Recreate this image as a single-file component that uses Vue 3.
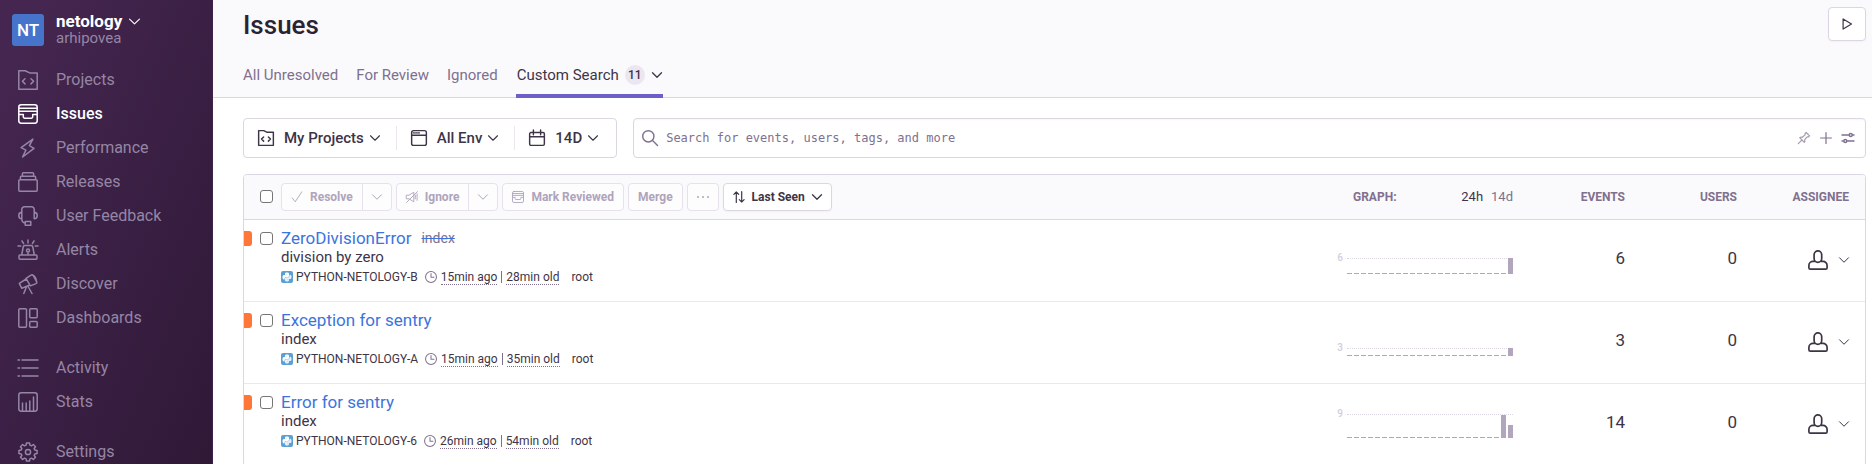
<script setup>
import { h, ref } from 'vue'

function gearPath() {
  const points = []
  for (let i = 0; i < 8; i++) {
    const mid = (i * Math.PI) / 4
    for (const [offset, radius] of [[-0.27, 7.1], [-0.17, 9.2], [0.17, 9.2], [0.27, 7.1]]) {
      points.push(`${(10 + radius * Math.sin(mid + offset)).toFixed(2)} ${(10 - radius * Math.cos(mid + offset)).toFixed(2)}`)
    }
  }
  return `M${points.join('L')}z M7.4 10a2.6 2.6 0 1 0 5.2 0a2.6 2.6 0 1 0-5.2 0`
}

const roundBox = 'M3.2.8h13.6a2.4 2.4 0 0 1 2.4 2.4v13.6a2.4 2.4 0 0 1-2.4 2.4H3.2a2.4 2.4 0 0 1-2.4-2.4V3.2A2.4 2.4 0 0 1 3.2.8z'

const icons = {
  projects: 'M.8.8h6.4l4.4 2.1h7.6v16.3H.8zM7 8.7l-2.6 2.6L7 13.9M13 8.7l2.6 2.6-2.6 2.6',
  issues: roundBox + 'M.8 4.2h18.4M.8 7.3h18.4M.8 10.6h4.5v2.2a1.4 1.4 0 0 0 1.4 1.4h6.6a1.4 1.4 0 0 0 1.4-1.4v-2.2h4.5',
  performance: 'M14.9 1.1L3.1 9.6l4.8 2.5L4.6 19 16 10.3l-4.6-2.6z',
  releases: 'M1.8 7.7h16.4a1 1 0 0 1 1 1v9.5a1 1 0 0 1-1 1H1.8a1 1 0 0 1-1-1V8.7a1 1 0 0 1 1-1zM2.4 7.7V5.2a1 1 0 0 1 1-1h13.2a1 1 0 0 1 1 1v2.5M4.4 4.2V1.8a1 1 0 0 1 1-1h9.2a1 1 0 0 1 1 1v2.4',
  feedback: 'M3.8 6.2V3.4A2.6 2.6 0 0 1 6.4.8h7.2a2.6 2.6 0 0 1 2.6 2.6v2.8M3.8 6.2v6.6c-2 0-3-1.5-3-3.3s1-3.3 3-3.3zM16.2 6.2v6.6c2 0 3-1.5 3-3.3s-1-3.3-3-3.3zM3.8 12.8c0 2.7 1.2 4.1 3.4 4.4M7.2 15.5h5.6v3.7H7.2z',
  alerts: 'M2 15h16a1 1 0 0 1 1 1v2.2a1 1 0 0 1-1 1H2a1 1 0 0 1-1-1V16a1 1 0 0 1 1-1zM3.7 15L5.2 7a1.7 1.7 0 0 1 1.7-1.4h6.2A1.7 1.7 0 0 1 14.8 7l1.5 8M8.5 10.5a1.5 1.5 0 1 0 3 0a1.5 1.5 0 1 0-3 0M10 12v3M10 0v3M4 1l1.6 2.6M16 1l-1.6 2.6M0 6h2.8M17.2 6H20',
  discover: 'M8 4.3l5-3.1a1.5 1.5 0 0 1 2-.1l3.7 6.6a1.5 1.5 0 0 1-.7 1.9l-5.6 2.3zM8.2 5L1.3 9.3l2.5 5 7.5-3.2M14 1c2.6.4 4.6 3.7 4.4 6.6M8.600 12.5L5.8 19.5M9.8 12l4.2 7.5',
  dashboards: 'M1.800.8h5.7a1 1 0 0 1 1 1v16.4a1 1 0 0 1-1 1H1.8a1 1 0 0 1-1-1V1.8a1 1 0 0 1 1-1zM12.700.8h5.5a1 1 0 0 1 1 1v7a1 1 0 0 1-1 1h-5.5a1 1 0 0 1-1-1v-7a1 1 0 0 1 1-1zM12.7 13.5h5.5a1 1 0 0 1 1 1v3.7a1 1 0 0 1-1 1h-5.5a1 1 0 0 1-1-1v-3.7a1 1 0 0 1 1-1z',
  activity: 'M0 2h1.5M4 2h16M0 10h1.5M4 10h16M0 18h1.5M4 18h16',
  stats: roundBox + 'M4.5 11v8M8.2 11v8M11.8 9v10M15.5 5v14',
  settings: gearPath(),
  window: roundBox + 'M.8 6.5h18.4M3 3.6h1.5M6 3.6h1.5M9 3.6h1.5',
  calendar: 'M2.4 3.2h15.2a1.6 1.6 0 0 1 1.6 1.6v12.8a1.6 1.6 0 0 1-1.6 1.6H2.4a1.6 1.6 0 0 1-1.6-1.6V4.8a1.6 1.6 0 0 1 1.6-1.6zM.8 8.5h18.4M5.5 0v6M14.5 0v6',
  search: 'M.9 7.9a7 7 0 1 0 14 0a7 7 0 1 0-14 0M12.9 12.9l6.5 6.5',
  pin: 'M.5 19.5l6.3-6.3M2.8 9.5l7.7 7.7c1-1.4 1.2-2.8.7-4.5l4.1-4.5 2 .1 1.9-1.9L13.6.8l-1.9 1.9.1 2L7.3 8.800c-1.7-.5-3.1-.3-4.500.7z',
  plus: 'M10 1v18M1 10h18',
  sliders: 'M0 5h12M17 5h3M12 5a2.5 2.5 0 1 0 5 0a2.5 2.5 0 1 0-5 0M0 15h3M8 15h12M3 15a2.5 2.5 0 1 0 5 0a2.5 2.5 0 1 0-5 0',
  check: 'M2 11.5l5 6.500L18 1.5',
  mute: 'M1 7h4l8-5v16l-8-5H1zM1 19L19 1M15.5 7v6M18.5 4.5v11',
  sort: 'M5.5 19V1.5M1.5 5.5l4-4 4 4M14.5 1v17.5M10.5 14.5l4 4 4-4',
  clock: 'M.9 10a9.1 9.1 0 1 0 18.2 0a9.1 9.1 0 1 0-18.2 0M10 4v6.5h5',
  play: 'M3.5 1.5v17L17.5 10z',
  user: 'M9.900.9a3.8 3.8 0 0 1 3.8 3.8v3.8a3.8 3.8 0 0 1-7.6 0V4.7A3.8 3.8 0 0 1 9.900.9zM6.3 11.4H5a4.1 4.1 0 0 0-4.1 4.1v2.2a1.4 1.4 0 0 0 1.4 1.4h15.4a1.4 1.4 0 0 0 1.4-1.4v-2.2a4.1 4.1 0 0 0-4.1-4.1h-1.4',
  chevron: 'M1 5.5l9 9 9-9',
}

const Icon = (props) =>
  h('svg', { viewBox: '0 0 20 20', width: props.size, height: props.size, class: 'icon', 'aria-hidden': 'true' }, [
    h('path', {
      d: icons[props.name],
      fill: 'none',
      stroke: 'currentColor',
      'stroke-width': props.weight || 1.5,
      'stroke-linecap': 'round',
      'stroke-linejoin': 'round',
    }),
  ])
Icon.props = ['name', 'size', 'weight']

const navGroups = [
  [
    { icon: 'projects', label: 'Projects' },
    { icon: 'issues', label: 'Issues', active: true },
    { icon: 'performance', label: 'Performance' },
    { icon: 'releases', label: 'Releases' },
    { icon: 'feedback', label: 'User Feedback' },
    { icon: 'alerts', label: 'Alerts' },
    { icon: 'discover', label: 'Discover' },
    { icon: 'dashboards', label: 'Dashboards' },
  ],
  [
    { icon: 'activity', label: 'Activity' },
    { icon: 'stats', label: 'Stats' },
  ],
  [{ icon: 'settings', label: 'Settings' }],
]

const tabs = ['All Unresolved', 'For Review', 'Ignored']

const filters = [
  { icon: 'projects', label: 'My Projects' },
  { icon: 'window', label: 'All Env' },
  { icon: 'calendar', label: '14D' },
]

const series = (...tail) => [...Array(24 - tail.length).fill(1), ...tail]

const issues = [
  { title: 'ZeroDivisionError', culprit: 'index', message: 'division by zero', id: 'PYTHON-NETOLOGY-B', seen: '15min ago', age: '28min old', events: 6, users: 0, peak: 6, height: 16, bars: series(16) },
  { title: 'Exception for sentry', message: 'index', id: 'PYTHON-NETOLOGY-A', seen: '15min ago', age: '35min old', events: 3, users: 0, peak: 3, height: 8, bars: series(8) },
  { title: 'Error for sentry', message: 'index', id: 'PYTHON-NETOLOGY-6', seen: '26min ago', age: '54min old', events: 14, users: 0, peak: 9, height: 24, bars: series(23, 13) },
]

const query = ref('')
</script>

<template>
  <div class="app">
    <aside class="sidebar">
      <button class="org" type="button">
        <span class="avatar">NT</span>
        <span class="org-text">
          <span class="org-name">netology <Icon name="chevron" :size="11" :weight="2" /></span>
          <span class="org-user">arhipovea</span>
        </span>
      </button>
      <nav>
        <ul v-for="(group, i) in navGroups" :key="i" class="nav-group">
          <li v-for="item in group" :key="item.label">
            <a href="#" class="nav-item" :class="{ active: item.active }">
              <Icon :name="item.icon" :size="20" /><span>{{ item.label }}</span>
            </a>
          </li>
        </ul>
      </nav>
    </aside>

    <main class="main">
      <header class="page-header">
        <div class="title-row">
          <h1>Issues</h1>
          <button class="play" type="button" aria-label="Real-time updates"><Icon name="play" :size="12" :weight="2" /></button>
        </div>
        <nav class="tabs">
          <a v-for="tab in tabs" :key="tab" href="#" class="tab">{{ tab }}</a>
          <a href="#" class="tab current">Custom Search <span class="badge">11</span><Icon name="chevron" :size="10" :weight="2.5" /></a>
        </nav>
      </header>

      <div class="content">
        <div class="controls">
          <div class="filters">
            <button v-for="f in filters" :key="f.label" type="button" class="filter">
              <Icon :name="f.icon" :size="16" :weight="1.8" /><span>{{ f.label }}</span><Icon name="chevron" :size="10" :weight="2.2" />
            </button>
          </div>
          <div class="search">
            <Icon name="search" :size="16" :weight="1.8" />
            <input v-model="query" type="text" aria-label="Search issues" placeholder="Search for events, users, tags, and more" />
            <button type="button" aria-label="Pin search" class="pin"><Icon name="pin" :size="12" :weight="2" /></button>
            <button type="button" aria-label="Save search"><Icon name="plus" :size="12" :weight="2" /></button>
            <button type="button" aria-label="Search builder"><Icon name="sliders" :size="12" :weight="2.4" /></button>
          </div>
        </div>

        <div class="panel">
          <table>
            <thead>
              <tr>
                <th class="col-issue">
                  <div class="toolbar">
                    <input type="checkbox" aria-label="Select all" />
                    <div class="actions">
                      <div class="split">
                        <button type="button" disabled><Icon name="check" :size="12" />Resolve</button>
                        <button type="button" disabled aria-label="Resolve options" class="more"><Icon name="chevron" :size="10" :weight="2" /></button>
                      </div>
                      <div class="split">
                        <button type="button" disabled><Icon name="mute" :size="12" />Ignore</button>
                        <button type="button" disabled aria-label="Ignore options" class="more"><Icon name="chevron" :size="10" :weight="2" /></button>
                      </div>
                      <div class="split"><button type="button" disabled><Icon name="issues" :size="12" />Mark Reviewed</button></div>
                      <div class="split"><button type="button" disabled>Merge</button></div>
                      <div class="split"><button type="button" disabled aria-label="More actions"><span class="dots"><i></i><i></i><i></i></span></button></div>
                      <div class="split enabled"><button type="button"><Icon name="sort" :size="12" :weight="2" />Last Seen<Icon name="chevron" :size="10" :weight="2.5" /></button></div>
                    </div>
                  </div>
                </th>
                <th class="col-graph">
                  <div class="graph-head">
                    <span>GRAPH:</span>
                    <span class="ranges"><a href="#" class="on">24h</a><a href="#">14d</a></span>
                  </div>
                </th>
                <th class="col-num">EVENTS</th>
                <th class="col-num">USERS</th>
                <th class="col-num">ASSIGNEE</th>
              </tr>
            </thead>
            <tbody>
              <tr v-for="issue in issues" :key="issue.id">
                <td class="issue-cell">
                  <div class="issue">
                    <span class="level"></span>
                    <input type="checkbox" :aria-label="'Select ' + issue.title" />
                    <div>
                      <div class="issue-title"><a href="#">{{ issue.title }}</a><s v-if="issue.culprit">{{ issue.culprit }}</s></div>
                      <div class="issue-message">{{ issue.message }}</div>
                      <div class="meta">
                        <svg class="platform" viewBox="0 0 12 12" width="12" height="12" aria-hidden="true">
                          <rect width="12" height="12" rx="2" fill="#5b9fd4" />
                          <path d="M4 4V2.800C4 1.900 4.700 1.500 6 1.500s2 .4 2 1.300v2C8 5.600 7.500 6 6.800 6H5C4.200 6 3.600 6.600 3.600 7.400v1H2.900C2 8.400 1.500 7.500 1.500 6.200S2 4 3 4h3.100v-.3z" fill="#fff" />
                          <path d="M8 8v1.200c0 .9-.7 1.300-2 1.300s-2-.4-2-1.300v-2C4 6.500 4.500 6.200 5.200 6.200H7c.9 0 1.500-.6 1.500-1.500v-1h.6c.9 0 1.400.9 1.400 2.200S10 8 9 8H5.900v.3z" fill="#e4f1fb" />
                        </svg>
                        <span class="short-id">{{ issue.id }}</span>
                        <Icon name="clock" :size="12" :weight="1.7" class="clock" />
                        <time>{{ issue.seen }}</time><span class="bar"></span><time>{{ issue.age }}</time>
                        <span class="logger">root</span>
                      </div>
                    </div>
                  </div>
                </td>
                <td class="graph-cell">
                  <div class="chart">
                    <span class="peak">{{ issue.peak }}</span>
                    <div class="plot" :style="{ height: issue.height + 'px' }">
                      <span v-for="(v, i) in issue.bars" :key="i" class="column" :style="{ height: v + 'px' }"></span>
                    </div>
                  </div>
                </td>
                <td class="count">{{ issue.events }}</td>
                <td class="count">{{ issue.users }}</td>
                <td>
                  <button type="button" class="assignee" aria-label="Assign">
                    <Icon name="user" :size="20" :weight="1.7" /><Icon name="chevron" :size="10" :weight="2" />
                  </button>
                </td>
              </tr>
            </tbody>
          </table>
        </div>
      </div>
    </main>
  </div>
</template>

<style>
html,
body {
  overflow: hidden;
}
</style>

<style scoped>
* {
  box-sizing: border-box;
}
.app {
  display: flex;
  height: 100vh;
  overflow: hidden;
  background: #fff;
  color: #3e3446;
  font: 16px/20px Roboto, "Liberation Sans", sans-serif;
}
button {
  display: inline-flex;
  align-items: center;
  padding: 0;
  border: 0;
  background: none;
  color: inherit;
  font: inherit;
}
a {
  color: inherit;
  text-decoration: none;
}
.icon {
  display: block;
  flex: none;
  overflow: visible;
}
input[type="checkbox"] {
  appearance: none;
  flex: none;
  width: 13px;
  height: 13px;
  margin: 0;
  border: 1px solid #767676;
  border-radius: 3px;
  background: #fff;
}

.sidebar {
  flex: none;
  width: 213px;
  padding: 13px 12px;
  border-right: 1px solid #3f2249;
  background: linear-gradient(294.17deg, #2f1937 2%, #452650 92%);
  color: #9586a5;
}
.org {
  gap: 12px;
  text-align: left;
}
.avatar {
  display: grid;
  place-items: center;
  width: 32px;
  height: 32px;
  border-radius: 3px;
  background: #4674ca;
  color: #fff;
  font-size: 17px;
  font-weight: 500;
}
.org-text {
  display: grid;
}
.org-name {
  display: flex;
  align-items: center;
  gap: 7px;
  height: 16px;
  color: #fff;
  font-size: 17px;
  font-weight: 700;
}
.org-user {
  height: 18px;
  line-height: 18px;
  font-size: 15px;
}
nav ul {
  margin: 0;
  padding: 0;
  list-style: none;
}
.sidebar nav {
  margin-top: 16px;
}
.nav-group + .nav-group {
  margin-top: 16px;
}
.nav-item {
  display: flex;
  align-items: center;
  gap: 18px;
  height: 34px;
  padding-left: 6px;
}
.nav-item.active {
  color: #fff;
  font-weight: 500;
}

.main {
  flex: 1;
  min-width: 0;
}
.page-header {
  padding: 7px 6px 0 30px;
  border-bottom: 1px solid #dbd6e1;
  background: #fafafc;
}
.title-row {
  display: flex;
  justify-content: space-between;
  height: 46px;
}
h1 {
  margin: 0;
  color: #2b2233;
  font-size: 26px;
  line-height: 36px;
  font-weight: 500;
}
.play {
  justify-content: center;
  width: 38px;
  height: 34px;
  border: 1px solid #dbd6e1;
  border-radius: 4px;
  background: #fff;
  box-shadow: 0 1px 2px rgba(43, 34, 51, 0.04);
}
.tabs {
  display: flex;
  gap: 18px;
  margin-bottom: -1px;
  color: #80708f;
  font-size: 15px;
}
.tab {
  display: flex;
  align-items: center;
  height: 45px;
  padding-top: 2px;
  border-bottom: 4px solid transparent;
}
.tab.current {
  padding-right: 1px;
  padding-left: 1px;
  border-color: #6c5fc7;
  color: #3e3446;
}
.badge {
  display: grid;
  place-items: center;
  width: 20px;
  height: 20px;
  margin: 0 7px 0 6px;
  border-radius: 10px;
  background: #ebe6ef;
  font-size: 12px;
  font-weight: 500;
}

.content {
  padding: 20px 6px 0 30px;
}
.controls {
  display: flex;
  gap: 16px;
  height: 40px;
}
.filters,
.search,
.panel {
  border: 1px solid #dbd6e1;
  border-radius: 4px;
}
.filters {
  display: flex;
  align-items: center;
  flex: none;
  padding-right: 2px;
}
.filter {
  height: 24px;
  padding: 0 16px 0 14px;
  font-size: 15px;
  font-weight: 500;
}
.filter + .filter {
  border-left: 1px solid #ebe6ef;
}
.filter span {
  margin: 0 6px 0 10px;
}
.search {
  display: flex;
  align-items: center;
  flex: 1;
  gap: 8px;
  padding: 0 11px 0 8px;
  color: #80708f;
  box-shadow: inset 0 1px 2px rgba(43, 34, 51, 0.04);
}
.search input {
  flex: 1;
  min-width: 0;
  padding: 0;
  border: 0;
  outline: 0;
  background: none;
  color: #3e3446;
  font: 12px/16px "DejaVu Sans Mono", monospace;
}
.search input::placeholder {
  color: #80708f;
  opacity: 1;
}
.search button {
  margin-left: 2px;
}
.search .pin {
  opacity: 0.7;
}

.panel {
  margin-top: 16px;
  overflow: hidden;
}
table {
  width: 100%;
  border-collapse: collapse;
  table-layout: fixed;
}
th,
td {
  padding: 0 16px 0 0;
  text-align: right;
}
th {
  height: 44px;
  border-bottom: 1px solid #dbd6e1;
  background: #fafafc;
  color: #80708f;
  font-size: 12px;
  font-weight: 700;
}
.col-graph {
  width: 208px;
}
.col-num {
  width: 112px;
}
tbody tr {
  height: 82px;
  border-bottom: 1px solid #ebe6ef;
}
.toolbar {
  display: flex;
  align-items: center;
  gap: 8px;
  padding-left: 16px;
}
.actions {
  display: flex;
  gap: 4px;
}
.split {
  display: flex;
  height: 28px;
  border: 1px solid #e6e1eb;
  border-radius: 4px;
  background: #fdfdfe;
  color: #afa4bb;
}
.split.enabled {
  border-color: #dbd6e1;
  background: #fff;
  color: #3e3446;
  box-shadow: 0 1px 2px rgba(43, 34, 51, 0.04);
}
.split button {
  gap: 7px;
  padding: 0 9px;
  font-size: 12px;
  font-weight: 700;
}
.split .more {
  border-left: 1px solid #e6e1eb;
}
.dots {
  display: flex;
  gap: 3px;
}
.dots i {
  width: 2px;
  height: 2px;
  border-radius: 1px;
  background: currentColor;
}
.graph-head {
  display: flex;
  justify-content: space-between;
  padding-left: 32px;
}
.ranges {
  display: flex;
  gap: 8px;
  font-size: 13px;
  font-weight: 400;
}
.ranges .on {
  color: #3e3446;
}

.issue-cell {
  padding: 8px 16px 0 0;
  text-align: left;
  vertical-align: top;
}
.issue {
  display: flex;
  gap: 8px;
}
.level {
  flex: none;
  width: 8px;
  height: 15px;
  margin-top: 3px;
  border-radius: 0 3px 3px 0;
  background: #ff7738;
}
.issue input {
  margin-top: 4px;
}
.issue-title {
  display: flex;
  align-items: center;
  gap: 10px;
  height: 20px;
  color: #3c74dd;
  font-size: 17px;
}
.issue-title s {
  color: #80708f;
  font-size: 14px;
  text-decoration-color: #3c74dd;
}
.issue-message {
  height: 18px;
  font-size: 15px;
  line-height: 18px;
}
.meta {
  display: flex;
  align-items: center;
  margin-top: 4px;
  font-size: 12px;
  line-height: 14px;
}
.short-id {
  margin: 0 7px 0 3px;
}
.clock {
  margin-right: 4px;
  color: #80708f;
}
time {
  border-bottom: 1px dotted #80708f;
}
.bar {
  width: 1px;
  height: 12px;
  margin: 0 4px;
  background: #80708f;
}
.logger {
  margin-left: 12px;
}

.graph-cell {
  height: 81px;
  padding-top: 30px;
  vertical-align: top;
}
.chart {
  display: flex;
  align-items: flex-start;
  justify-content: flex-end;
  gap: 4px;
  min-height: 24px;
}
.plot {
  display: flex;
  align-items: flex-end;
  gap: 2px;
  border-top: 1px dotted #dbd6e1;
}
.chart {
  display: grid;
  grid-template-columns: auto auto;
  align-content: end;
}
.column {
  width: 5px;
  background: #b2a6bf;
}
.peak {
  height: 0;
  color: #d3cddb;
  font-size: 10px;
  font-weight: 500;
  line-height: 0;
}
.count {
  padding-bottom: 4px;
  font-size: 17px;
}
.assignee {
  gap: 11px;
  vertical-align: middle;
}
</style>
